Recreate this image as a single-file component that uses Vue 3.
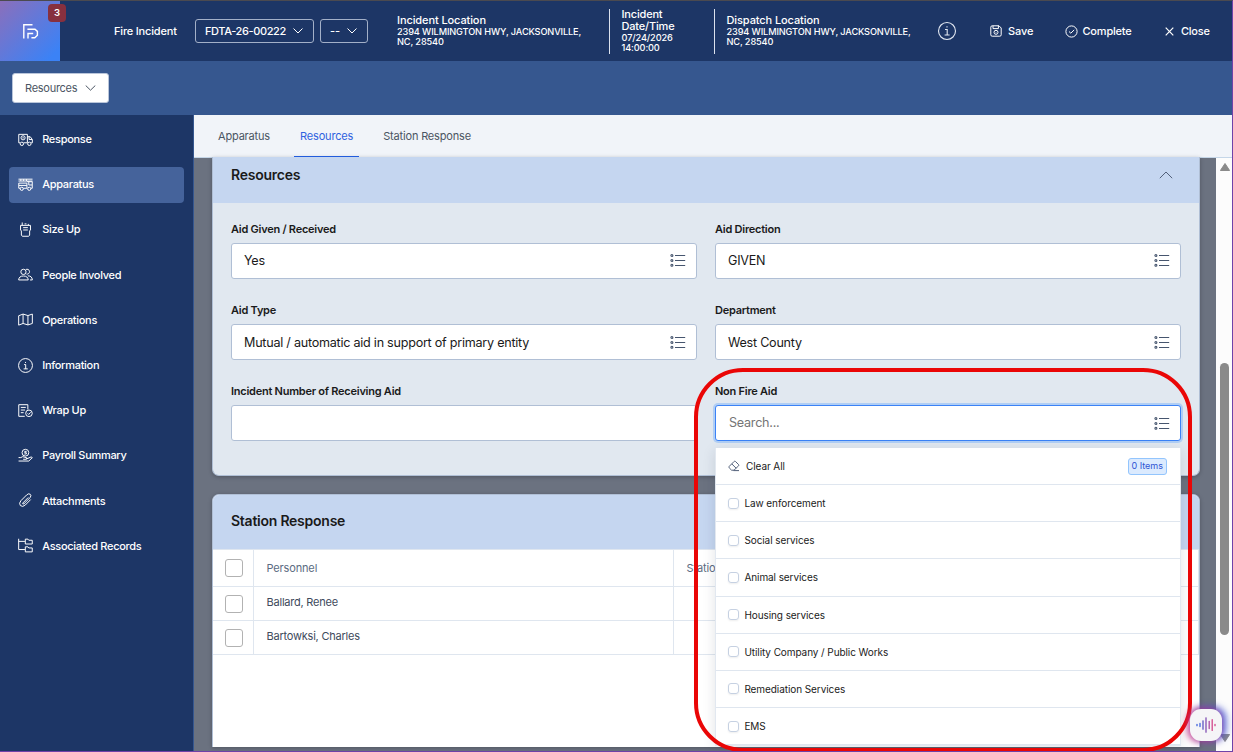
<template>
  <div class="app">
    <header class="topbar">
      <div class="logo">
        <svg width="17" height="17" viewBox="0 0 17 17">
          <path d="M1.8 16.5V2.8H10.5M6 16.5V11.5H11.2M5.4 7.2H13L15.4 9.4V13.2L12.8 15.8H9.4" />
        </svg>
        <span class="badge">3</span>
      </div>
      <span class="modulo">Fire Incident</span>
      <button class="selector numero">FDTA-26-00222
        <svg width="10" height="6" viewBox="0 0 10 6"><path d="M.5 .5L5 5L9.5 .5" /></svg>
      </button>
      <button class="selector corto">--
        <svg width="10" height="6" viewBox="0 0 10 6"><path d="M.5 .5L5 5L9.5 .5" /></svg>
      </button>
      <div class="dato lugar">
        <p>Incident Location</p>
        <small>2394 WILMINGTON HWY, JACKSONVILLE, NC, 28540</small>
      </div>
      <div class="dato fecha">
        <p>Incident Date/Time</p>
        <small>07/24/2026 14:00:00</small>
      </div>
      <div class="dato despacho">
        <p>Dispatch Location</p>
        <small>2394 WILMINGTON HWY, JACKSONVILLE, NC, 28540</small>
      </div>
      <svg class="info" width="20" height="20" viewBox="0 0 20 20">
        <circle cx="10" cy="10" r="8.5" /><path d="M8 8.5H10.2V14M7.6 14H12.6M10 5.2V6.6" />
      </svg>
      <a class="accion guardar">
        <svg width="12" height="12" viewBox="0 0 12 12">
          <path d="M.8 2.2Q.8.8 2.2.8H9L11.2 3V9.8Q11.2 11.2 9.8 11.2H2.2Q.8 11.2.8 9.8ZM3 .8V3.6H8.4V.8" /><circle cx="6" cy="7.3" r="2" /><path d="M6 7V7.6" />
        </svg>
        Save
      </a>
      <a class="accion completar">
        <svg width="13" height="13" viewBox="0 0 13 13"><circle cx="6.5" cy="6.5" r="5.6" /><path d="M4 6.5L5.8 8.2L9.2 4.9" /></svg>
        Complete
      </a>
      <a class="accion cerrar">
        <svg width="9" height="9" viewBox="0 0 9 9"><path d="M.7 .7L8.3 8.3M8.3 .7L.7 8.3" /></svg>
        Close
      </a>
    </header>

    <div class="subbar">
      <button class="btn-recursos">Resources
        <svg width="11" height="6" viewBox="0 0 11 6"><path d="M.7 .5L5.5 5.2L10.3 .5" /></svg>
      </button>
    </div>

    <div class="cuerpo">
      <nav class="sidebar">
        <a v-for="item in menu" :key="item.texto" class="menu-item" :class="{ activo: item.texto === 'Apparatus' }">
          <svg width="15" height="15" viewBox="0 0 16 16"><path v-for="(d, i) in item.trazos" :key="i" :d="d" /></svg>
          {{ item.texto }}
        </a>
      </nav>

      <div class="principal">
        <div class="tabs">
          <span class="tab">Apparatus</span>
          <span class="tab activa">Resources</span>
          <span class="tab">Station Response</span>
        </div>

        <div class="zona">
          <main class="contenido">
            <section class="card recursos">
              <div class="card-header">
                <h3>Resources</h3>
                <svg width="14" height="8" viewBox="0 0 14 8"><path d="M.8 7.2L7 1L13.2 7.2" /></svg>
              </div>
              <div class="formulario">
                <div v-for="campo in campos" :key="campo.label" class="campo">
                  <label>{{ campo.label }}</label>
                  <div class="entrada" :class="{ foco: campo.buscar }">
                    <span :class="{ placeholder: campo.buscar }">{{ campo.valor }}</span>
                    <svg v-if="campo.valor" width="16" height="14" viewBox="0 0 16 14">
                      <path class="lineas" d="M5 2.5H15.2M5 7.5H15.2M5 12.5H15.2" />
                      <circle cx="1.9" cy="2.5" r="1" /><circle cx="1.9" cy="7.5" r="1" /><circle cx="1.9" cy="12.3" r="1" />
                    </svg>
                  </div>
                  <div v-if="campo.buscar" class="dropdown">
                    <div class="fila limpiar">
                      <svg width="12" height="12" viewBox="0 0 12 12"><path d="M1.2 6.4L6.2 1.4Q6.8 .8 7.4 1.4L10.6 4.6Q11.2 5.2 10.6 5.8L6 10.2H3.6L1.2 7.8Q.5 7.1 1.2 6.4ZM3.8 3.9L8.1 8.2M5.5 10.6H11" /></svg>
                      <span>Clear All</span>
                      <b>0 Items</b>
                    </div>
                    <div v-for="opcion in opciones" :key="opcion" class="fila">
                      <i class="check"></i>
                      <span>{{ opcion }}</span>
                    </div>
                  </div>
                </div>
              </div>
            </section>

            <section class="card estacion">
              <div class="card-header"><h3>Station Response</h3></div>
              <div class="tabla">
                <div v-for="(fila, i) in personal" :key="fila" class="renglon" :class="{ cabecera: i === 0 }">
                  <div class="celda"><i class="casilla"></i></div>
                  <div class="celda nombre">{{ fila }}</div>
                  <div class="celda">{{ i === 0 ? 'Station' : '' }}</div>
                </div>
              </div>
            </section>
          </main>
          <div class="scrollbar">
            <svg width="10" height="8" viewBox="0 0 10 8"><path d="M5 .5L9.6 7.5H.4Z" /></svg>
            <div class="thumb"></div>
            <svg class="abajo" width="10" height="8" viewBox="0 0 10 8"><path d="M5 7.5L9.6 .5H.4Z" /></svg>
          </div>
        </div>
      </div>
    </div>

    <div class="resaltado"></div>
    <div class="asistente">
      <svg width="20" height="16" viewBox="0 0 20 16">
        <path stroke="#3f62dc" d="M1 7.3V8.7M4 6.4V9.6" />
        <path stroke="#5c55c4" d="M7 3.8V12.2" />
        <path stroke="#8050b4" d="M10 .8V15.2" />
        <path stroke="#a94ca6" d="M13.2 4.4V11.6" />
        <path stroke="#d3478c" d="M16.2 2.6V13.4M19 7.3V8.7" />
      </svg>
    </div>
  </div>
</template>

<script setup>
import { ref } from 'vue';

const menu = [
  { texto: 'Response', trazos: ['M2.2 11.5H.8V2.5H10V11.5H6M10 5H13L15.3 8V11.5H14M11.8 5V8H15', 'M3.2 6.2A2.2 2.2 0 1 0 7.6 6.2A2.2 2.2 0 1 0 3.2 6.2M5.4 5.4V7', 'M2.3 12.6A1.8 1.8 0 1 0 5.9 12.6A1.8 1.8 0 1 0 2.3 12.6M10.3 12.6A1.8 1.8 0 1 0 13.9 12.6A1.8 1.8 0 1 0 10.3 12.6'] },
  { texto: 'Apparatus', trazos: ['M.5 2.3H15.5M.5 4.3H15.5M3 2.3V4.3M6 2.3V4.3M9 2.3V4.3', 'M2.3 12H.8V6.5H9.5V12H5.8M9.5 5H15.2V12H13.8M11.5 5V8.5H15M1 9H9.5', 'M2.3 12.6A1.7 1.7 0 1 0 5.7 12.6A1.7 1.7 0 1 0 2.3 12.6M10.3 12.6A1.7 1.7 0 1 0 13.7 12.6A1.7 1.7 0 1 0 10.3 12.6'] },
  { texto: 'Size Up', trazos: ['M4.5 .5V3.5M7 2H9M11 2V3.5', 'M2.7 3.6H13.3V8.5L12.4 9.5V14L11.4 15.2H4.6L3.6 14V9.5L2.7 8.5Z', 'M5.5 6H10.5M5.5 8.5H10.5'] },
  { texto: 'People Involved', trazos: ['M3 5.2A2.8 2.8 0 1 0 8.6 5.2A2.8 2.8 0 1 0 3 5.2', 'M8.3 2.8A2.6 2.6 0 1 1 9 7.5', 'M.7 13.8Q1 9.6 5.8 9.6T10.9 13.8ZM10.5 9.4Q15 9.4 15.3 13.8H12.8'] },
  { texto: 'Operations', trazos: ['M.7 4L5.4 2.2L10.6 3.8L15.3 2.2V12.2L10.6 13.8L5.4 12.2L.7 14Z', 'M5.4 2.2V12.2M10.6 3.8V13.8'] },
  { texto: 'Information', trazos: ['M.6 8A7.4 7.4 0 1 0 15.4 8A7.4 7.4 0 1 0 .6 8', 'M6.5 7H8.2V11.6M6 11.6H10.4M8 4.2V5.3'] },
  { texto: 'Wrap Up', trazos: ['M7.2 14.2H.8V1.8H10.5V7', 'M3 4.7H8.3M3 7.5H7.5M3 10.3H6', 'M8.2 11A3.5 3.5 0 1 0 15.2 11A3.5 3.5 0 1 0 8.2 11M10.2 11L11.4 12.2L13.5 9.9'] },
  { texto: 'Payroll Summary', trazos: ['M4.3 5A3.6 3.6 0 1 0 11.5 5A3.6 3.6 0 1 0 4.3 5', 'M9.2 3.6H7.2V5H8.9V6.4H6.8', 'M.6 10.2H3L5 9.2L9.3 10.4L9 12H5.5M9.3 11.6L14 9.5L15.3 10.3L11.5 13.9H.6'] },
  { texto: 'Attachments', trazos: ['M10.9 4.8L5.2 10.6Q4.5 12.3 6.2 11.7L12.8 5Q14.7 2.7 13 1.3Q11.3 .1 9.3 2L3.1 8.2Q.6 11 2.5 13.4Q4.9 15.5 7.8 12.8L13.5 7'] },
  { texto: 'Associated Records', trazos: ['M.7 .8V12.3H7.4M.7 3.6H7.4', 'M7.8 1.2H10.6L11.5 2.4H15.2V6.4H7.8Z', 'M7.8 9.4H10.6L11.5 10.6H15.2V14.8H7.8Z'] }
];

const campos = ref([
  { label: 'Aid Given / Received', valor: 'Yes' },
  { label: 'Aid Direction', valor: 'GIVEN' },
  { label: 'Aid Type', valor: 'Mutual / automatic aid in support of primary entity' },
  { label: 'Department', valor: 'West County' },
  { label: 'Incident Number of Receiving Aid', valor: '' },
  { label: 'Non Fire Aid', valor: 'Search...', buscar: true }
]);

const opciones = [
  'Law enforcement',
  'Social services',
  'Animal services',
  'Housing services',
  'Utility Company / Public Works',
  'Remediation Services',
  'EMS'
];

// La primera fila es la cabecera de la tabla
const personal = ['Personnel', 'Ballard, Renee', 'Bartowksi, Charles'];
</script>

<style>
body { background: #6b7280; overflow: hidden; }
</style>

<style scoped>
* { box-sizing: border-box; }
.app {
  position: relative;
  width: 1233px;
  height: 752px;
  display: flex;
  flex-direction: column;
  overflow: hidden;
  font-family: Inter, sans-serif;
  font-size: 11px;
  letter-spacing: -0.18px;
  color: #1a1a1a;
  border-top: 1px solid #4b4a50;
  border-right: 1px solid #6f42a8;
  border-bottom: 1px solid #6f42a8;
}
svg { fill: none; stroke: currentColor; flex: none; }
button { font-family: inherit; margin: 0; white-space: nowrap; }
p, h3 { margin: 0; }

.topbar {
  height: 60px;
  flex: none;
  display: flex;
  align-items: center;
  background: #1d3666;
  color: #fff;
  font-weight: 500;
}
.logo {
  position: relative;
  width: 60px;
  height: 60px;
  padding: 21px 22px;
  background: linear-gradient(135deg, #8b6fbb 0%, #3b82f6 90%);
}
.logo svg { display: block; stroke-width: 1.4; }
.badge {
  position: absolute;
  left: 48px;
  top: 3px;
  width: 18px;
  height: 18px;
  border-radius: 4px;
  background: #87303f;
  font-size: 9.5px;
  font-weight: 600;
  line-height: 18px;
  text-align: center;
}
.modulo { width: 81px; margin-left: 54px; }
.selector {
  height: 24px;
  padding: 0 10px 0 9px;
  display: flex;
  align-items: center;
  justify-content: space-between;
  background: none;
  border: 1px solid #a3b0c8;
  border-radius: 3px;
  color: #fff;
  font-size: 11px;
  font-weight: 500;
  letter-spacing: -0.38px;
}
.numero { width: 119px; }
.corto { width: 48px; margin-left: 6px; letter-spacing: 0; }
.dato { height: 45px; padding-bottom: 1px; display: flex; flex-direction: column; justify-content: center; }
.dato p { margin-bottom: 1px; font-size: 11px; line-height: 12px; letter-spacing: -0.18px; }
.dato p, .dato small { position: static; }
.dato small { font-size: 9.2px; line-height: 10px; letter-spacing: -0.12px; }
.lugar { width: 212px; margin-left: 29px; padding-right: 20px; }
.lugar p, .despacho p { letter-spacing: -0.1px; }
.fecha { width: 105px; padding: 0 25px 1px 11.5px; border-left: 1px solid #dbe2ee; }
.despacho { width: 223px; padding: 0 20px 1px 11.5px; border-left: 1px solid #dbe2ee; }
.info { stroke-width: 1.1; color: #e2e8f2; }
.accion { display: flex; align-items: center; gap: 6px; }
.guardar { width: 75px; margin-left: 33px; letter-spacing: -0.1px; }
.completar { width: 100px; gap: 4.5px; letter-spacing: -0.2px; }
.cerrar { gap: 7px; letter-spacing: -0.25px; }
.cerrar svg { stroke-width: 1.2; }

.subbar { height: 54px; flex: none; padding: 12px; background: #36578f; }
.btn-recursos {
  width: 97px;
  height: 30px;
  padding: 0 12px;
  display: flex;
  align-items: center;
  justify-content: space-between;
  background: #fff;
  border: 1px solid #b9c5da;
  border-radius: 3px;
  color: #4b5563;
  font-size: 11px;
  letter-spacing: -0.27px;
}

.cuerpo { flex: 1; min-height: 0; display: flex; }
.sidebar {
  width: 194px;
  flex: none;
  padding: 6.4px 9px;
  display: flex;
  flex-direction: column;
  gap: 9.2px;
  background: #1d3666;
  border-right: 1px solid #36578f;
}
.menu-item {
  height: 36px;
  padding: 0 0 0.6px 9px;
  display: flex;
  align-items: center;
  gap: 9.2px;
  border-radius: 4px;
  color: #fff;
  font-weight: 500;
  letter-spacing: -0.3px;
  flex: none;
}
.menu-item svg { stroke-width: 1.05; }
.menu-item.activo { background: #45639b; }

.principal { flex: 1; min-width: 0; display: flex; flex-direction: column; }
.tabs {
  height: 42px;
  flex: none;
  display: flex;
  padding-left: 18px;
  gap: 18.1px;
  background: #f1f4f9;
}
.tab { padding: 0 6px; line-height: 42px; color: #4b5563; }
.tab.activa { color: #2f62e0; border-bottom: 1px solid #2563eb; }

.zona { flex: 1; min-height: 0; display: flex; border-top: 1px solid #c5d6e8; }
.contenido {
  flex: 1;
  height: 590px;
  padding: 0 16px 0 18px;
  display: flex;
  flex-direction: column;
  gap: 18px;
  background: linear-gradient(#c5d6e8 1px, #6b7280 1px);
  margin-top: -1px;
}
.card {
  background: #fff;
  border: 1px solid #b0bfd5;
  border-radius: 7px;
  box-shadow: 0 1px 4px rgba(0, 0, 0, 0.25);
}
.card-header {
  display: flex;
  align-items: center;
  justify-content: space-between;
  padding: 0 26.5px 0 18px;
  background: #c5d6f0;
}
.card-header h3 { font-size: 14px; font-weight: 600; letter-spacing: -0.25px; }
.recursos { height: 319px; flex: none; background: #e1e8f0; border-top: none; border-radius: 0 0 7px 7px; }
.recursos .card-header { height: 46px; padding-bottom: 10px; }
.recursos .card-header h3 { padding-bottom: 2px; }
.recursos .card-header svg { color: #52607a; }
.formulario {
  padding: 18px;
  display: grid;
  grid-template-columns: 1fr 1fr;
  grid-auto-rows: 58px;
  gap: 23px 18px;
}
.campo { position: relative; }
.campo label { display: block; height: 22px; line-height: 17px; font-weight: 600; letter-spacing: -0.25px; }
.entrada {
  height: 36px;
  padding: 0 10px 0 12px;
  display: flex;
  align-items: center;
  justify-content: space-between;
  background: #fff;
  border: 1px solid #b0bfd5;
  border-radius: 3px;
  font-size: 12.6px;
  letter-spacing: -0.25px;
}
.entrada span { padding-bottom: 1px; }
.campo:nth-child(3) span, .campo:nth-child(4) span { padding-bottom: 0; }
.entrada svg { color: #46556e; }
.campo:nth-child(-n+2) svg { margin-bottom: 2px; }
.entrada circle { stroke-width: 1.1; }
.entrada.foco { border-color: #3b82f6; box-shadow: 0 0 0 2px #b0cef5; }
.entrada .placeholder { color: #757575; padding: 0 0 2px 1px; }

.dropdown {
  position: absolute;
  top: 65px;
  left: 0;
  right: 0;
  z-index: 5;
  background: #fff;
  border: 1px solid #e2e8f0;
  border-top: none;
  box-shadow: 0 3px 12px rgba(30, 41, 59, 0.13);
}
.fila {
  height: 37.15px;
  padding: 0 13px 0 12px;
  display: flex;
  align-items: center;
  gap: 5.4px;
  border-bottom: 1px solid #dfe6ef;
  font-size: 10px;
  letter-spacing: -0.08px;
}
.limpiar { gap: 6px; }
.limpiar svg { color: #52607a; }
.limpiar b {
  margin-left: auto;
  height: 17px;
  padding: 0 3px;
  border: 1px solid #93c5fd;
  border-radius: 3px;
  background: #dbeafe;
  color: #2f55d4;
  font-size: 9px;
  font-weight: 400;
  line-height: 14px;
  letter-spacing: 0;
}
.check { width: 11px; height: 11px; border: 1px solid #c6d1e2; border-radius: 3px; box-shadow: 0 1px 2px rgba(0, 0, 0, 0.07); }

.estacion { flex: 1; border-bottom: none; border-radius: 7px 7px 0 0; overflow: hidden; }
.estacion .card-header { height: 54px; padding-bottom: 3px; }
.renglon {
  height: 34px;
  display: grid;
  grid-template-columns: 41px 420px 1fr;
  border-bottom: 1px solid #dfe6ef;
  color: #404a5c;
  letter-spacing: -0.22px;
}
.renglon.cabecera { height: 38px; border-top: 1px solid #dfe6ef; color: #5b6b82; letter-spacing: -0.15px; }
.celda { padding-left: 12.5px; display: flex; align-items: center; border-right: 1px solid #dfe6ef; }
.celda:first-child { padding-left: 12px; }
.renglon:not(.cabecera) .nombre { padding-bottom: 4px; }
.casilla { width: 18px; height: 18px; border: 1px solid #b2b2b2; border-radius: 3px; }

.scrollbar {
  width: 16px;
  flex: none;
  padding: 5px 3px 9px 4px;
  display: flex;
  flex-direction: column;
  background: #fcfcfc;
}
.scrollbar svg { fill: #8a8a8a; stroke: #8a8a8a; }
.thumb { width: 9px; height: 272px; margin-top: 192px; border-radius: 5px; background: #8a8a8a; }
.abajo { margin-top: auto; }

/* marco rojo alrededor del campo Non Fire Aid */
.resaltado {
  position: absolute;
  left: 694px;
  top: 367px;
  width: 498px;
  height: 384px;
  border: 4px solid #ea0606;
  border-radius: 49px;
  z-index: 10;
}
.asistente {
  position: absolute;
  left: 1190px;
  top: 708px;
  width: 32px;
  height: 32px;
  display: flex;
  align-items: center;
  justify-content: center;
  border-radius: 11px;
  background: #f5f5f7;
  box-shadow: -2px 0 6px 1px rgba(207, 48, 130, 0.75), 3px -1px 7px 1px rgba(54, 84, 214, 0.85);
  z-index: 11;
}
.asistente path { stroke-width: 1.3; stroke-linecap: round; }
</style>
